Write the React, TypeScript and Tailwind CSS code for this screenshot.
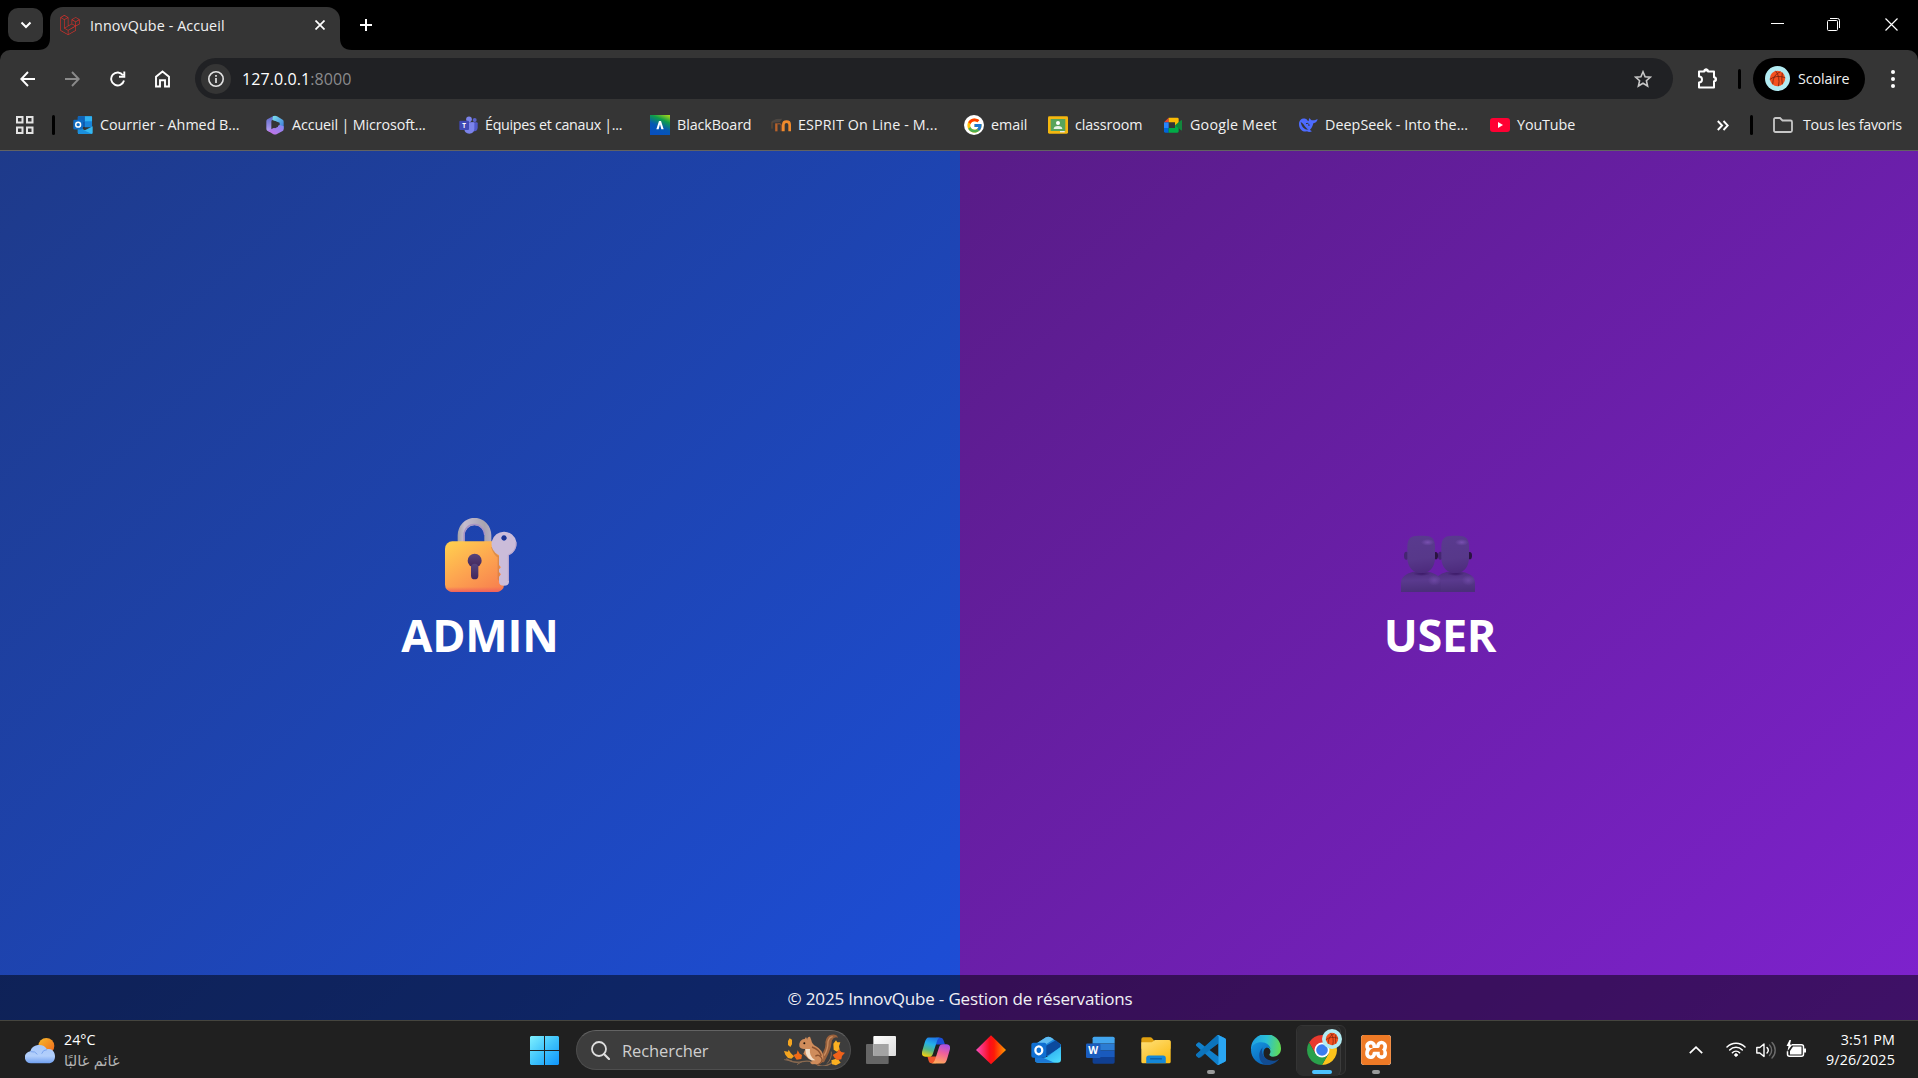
import type { ReactNode } from "react";
import { FcGoogle } from "react-icons/fc";
import { SiLaravel, SiXampp } from "react-icons/si";

/* ---------- Bookmark icons (20 x 20) ---------- */

const OutlookMark = () => (
  <svg className="size-5" viewBox="218 345 62 62">
    <path d="M233 353q0-4 4-4h36q4 0 4 4v28h-44z" fill="#1a8fe0" />
    <path d="M233 349h22v16h-22z" fill="#0f63b8" />
    <path d="M255 349h22v16h-22z" fill="#2fb2f2" />
    <path d="M233 365h22v16h-22z" fill="#0f59ad" />
    <path d="M255 365h22v18h-22z" fill="#1784d9" />
    <path d="M233 382l22 10 24-12v20q0 4-4 4h-38q-4 0-4-4z" fill="#35b8f1" />
    <path d="M233 384l44 20h-40q-4 0-4-4z" fill="#1a8fdd" />
    <rect x="219" y="360" width="30" height="30" rx="3" fill="#0f6cc4" />
    <circle cx="234" cy="375" r="7.5" fill="none" stroke="#fff" strokeWidth="4.5" />
  </svg>
);

const M365Mark = () => (
  <svg className="size-5" viewBox="795 345 60 60">
    <defs>
      <linearGradient id="m1" x1="0" y1="0" x2="0" y2="1">
        <stop offset="0" stopColor="#5a68c8" />
        <stop offset="1" stopColor="#b9a2f4" />
      </linearGradient>
      <linearGradient id="m2" x1="0" y1="0" x2="1" y2="1">
        <stop offset="0" stopColor="#7de4ee" />
        <stop offset="1" stopColor="#3a74d8" />
      </linearGradient>
      <linearGradient id="m3" x1="0" y1="1" x2="1" y2="0">
        <stop offset="0" stopColor="#cc6fe6" />
        <stop offset="1" stopColor="#7f8af0" />
      </linearGradient>
    </defs>
    <path d="M820 348l-18 10q-3 2-3 6v22q0 4 3 6l8 4q4 0 4-5v-26q0-4 3-6l12-7z" fill="url(#m1)" />
    <path d="M819 349q6-4 12 0l17 10q3 2 3 6v22l-12-10v-9l-22-8z" fill="url(#m2)" />
    <path d="M803 392l18-8 18-9 12 4v8q0 4-3 6l-17 9q-6 3-12 0z" fill="url(#m3)" />
    <path d="M817 368l8-5 9 5v12l-9 5-8-5z" fill="#353535" />
  </svg>
);

const TeamsMark = () => (
  <svg className="size-5" viewBox="53 195 60 60">
    <circle cx="103" cy="210" r="6" fill="#5a62c9" />
    <circle cx="86" cy="208" r="8.500" fill="#7b83eb" />
    <path d="M92 217h17q3 0 3 3v12q0 12-10 12-6 0-8-3z" fill="#5059c9" />
    <path d="M72 217h27q3 0 3 3v15q0 16-15 16t-15-16z" fill="#7b83eb" />
    <rect x="57" y="212" width="29" height="28" rx="3" fill="#4149b5" />
    <text x="71.500" y="233" textAnchor="middle" fontSize="19" fontWeight="700" fill="#fff">T</text>
  </svg>
);

const BlackboardMark = () => (
  <svg className="size-5" viewBox="0 0 60 60">
    <defs>
      <linearGradient id="bb" x1="0.9" y1="0" x2="0.45" y2="1">
        <stop offset="0" stopColor="#a6d61c" />
        <stop offset="0.3" stopColor="#0f9e49" />
        <stop offset="0.65" stopColor="#0558b4" />
        <stop offset="1" stopColor="#0650c0" />
      </linearGradient>
    </defs>
    <path fill="url(#bb)" d="M0 0h60v60H0z" />
    <path d="M19 43l8-25h6l8 25h-7l-4-15-4 15z" fill="#fff" />
  </svg>
);

const MoodleMark = () => (
  <svg className="size-5" viewBox="993 195 60 60">
    <path d="M994 214l15-7 18-1-8 10-21 2z" fill="#4d4742" />
    <path d="M996 216v20" stroke="#8a5a32" strokeWidth="2" />
    <path d="M1009 244v-24" stroke="#b9622a" strokeWidth="7" />
    <path d="M1012 222q10-3 12 4v18" fill="none" stroke="#8a5230" strokeWidth="4" />
    <path d="M1030 244v-20q0-9 9.500-9t9.500 9v20" fill="none" stroke="#f08a2c" strokeWidth="8" />
  </svg>
);

const GoogleMark = () => (
  <span className="flex size-5 items-center justify-center rounded-full bg-white">
    <FcGoogle className="size-[17px]" />
  </span>
);

const ClassroomMark = () => (
  <svg className="size-5" viewBox="0 0 60 60">
    <rect x="0" y="4" width="60" height="52" rx="4" fill="#f4b70f" />
    <rect x="8" y="12" width="44" height="36" fill="#57a45b" />
    <circle cx="30" cy="24" r="6" fill="#fff" />
    <path d="M17 42q0-9 13-9t13 9z" fill="#e6f2e6" />
    <path d="M36 48h14v4H36z" fill="#e8eaed" />
  </svg>
);

const MeetMark = () => (
  <svg className="size-5" viewBox="669 195 60 60">
    <path d="M672 217l14-14v14z" fill="#ea4335" />
    <path d="M686 203h26q4 0 4 4v15l-11 8v-13h-19z" fill="#fbbc04" />
    <path d="M672 217h14v17h-14z" fill="#2684fc" />
    <path d="M672 234h14v14h-10q-4 0-4-4z" fill="#0066da" />
    <path d="M686 234h19v-9l11 8v11q0 4-4 4h-26z" fill="#00ac47" />
    <path d="M705 226l18-15q3-2 3 2v26q0 4-3 2z" fill="#12873c" />
  </svg>
);

const DeepSeekMark = () => (
  <svg className="size-5" viewBox="1073 195 60 60">
    <path
      d="M1076 222c0-12 9-18 19-16 5 1 5 4 9 8 3-4 0-6 4-10 2 5 5 7 9 7 6 0 10-2 15-4-1 7-6 12-13 13-2 9-5 15-10 19 2 3 6 4 6 5-5 3-11 3-15 0-14 4-24-8-24-22z"
      fill="#4d6bfe"
    />
    <path d="M1081 216c7 2 10 11 17 18 2 2 5 4 7 4-11 3-21-6-24-22z" fill="#353535" />
    <path d="M1097 221c5-3 10 1 9 7" fill="none" stroke="#353535" strokeWidth="3" />
  </svg>
);

const YouTubeMark = () => (
  <svg className="size-5" viewBox="0 0 60 60">
    <rect y="9" width="60" height="42" rx="9" fill="#ff0033" />
    <path d="M24 21v18l15-9z" fill="#fff" />
  </svg>
);

function Bookmark({ icon, label, width, text }: { icon: ReactNode; label: string; width: string; text: string }) {
  return (
    <div className={`flex shrink-0 items-center gap-[7px] ${width}`}>
      {icon}
      <span className={`whitespace-nowrap ${text}`}>{label}</span>
    </div>
  );
}

/* ---------- Basketball avatar ---------- */

const Basketball = ({ className }: { className: string }) => (
  <svg className={className} viewBox="0 0 26 26">
    <circle cx="13" cy="13" r="13" fill="#b2ebf2" />
    <circle cx="13" cy="13" r="8" fill="#f4511e" />
    <path d="M5 14q6-5 16-2M11 5q5 6 3 16M16 6q-8 3-8 13M18 7q-1 7 0 12" fill="none" stroke="#7a2410" strokeWidth="0.9" />
  </svg>
);

/* ---------- Browser window ---------- */

function TabStrip() {
  return (
    <div className="flex h-[50px] bg-black pl-2">
      <button className="mt-2 flex h-[34px] w-[35px] items-center justify-center rounded-[10px] bg-[#353535]">
        <svg className="size-3" viewBox="0 0 12 12">
          <path d="M1.500 3.500L6 8l4.500-4.500" fill="none" stroke="#fff" strokeWidth="2" />
        </svg>
      </button>
      <div className="relative ml-[7px] mt-[7px] flex h-[43px] w-[290px] items-center rounded-t-[13px] bg-[#353535] pb-[7px] pl-[10px]">
        <svg className="absolute -left-3 bottom-0 size-3" viewBox="0 0 12 12">
          <path d="M12 0v12H0Q12 12 12 0z" fill="#353535" />
        </svg>
        <svg className="absolute -right-3 bottom-0 size-3" viewBox="0 0 12 12">
          <path d="M0 0v12h12Q0 12 0 0z" fill="#353535" />
        </svg>
        <SiLaravel className="size-5 text-[#d9302a]" />
        <span className="ml-[10px] w-[225px] whitespace-nowrap pt-px text-[14.300px] tracking-[0.1px] text-[#f1f1f1]">
          InnovQube - Accueil
        </span>
        <svg className="size-[10px]" viewBox="0 0 10 10">
          <path d="M.5.5l9 9m0-9l-9 9" stroke="#fff" strokeWidth="1.700" />
        </svg>
      </div>
      <svg className="ml-5 mt-[19px] size-3" viewBox="0 0 12 12">
        <path d="M6 0v12M0 6h12" stroke="#fff" strokeWidth="2" />
      </svg>
      <div className="ml-auto mr-5 mt-[18px] flex h-[13px] items-start">
        <svg className="mr-[43px] h-[13px] w-[13px]" viewBox="0 0 13 13">
          <path d="M0 5.500h13" stroke="#fff" strokeWidth="1" />
        </svg>
        <svg className="mr-[45px] size-[13px]" viewBox="0 0 13 13" fill="none" stroke="#fff">
          <rect x=".5" y="2.500" width="10" height="10" rx="1" />
          <path d="M3 .5h7.500a2 2 0 0 1 2 2V10" />
        </svg>
        <svg className="size-[13px]" viewBox="0 0 13 13">
          <path d="M.5.5l12 12m0-12l-12 12" stroke="#fff" strokeWidth="1.200" />
        </svg>
      </div>
    </div>
  );
}

function Toolbar() {
  return (
    <div className="bg-black">
      <div className="flex h-[50px] items-center rounded-t-[10px] bg-[#353535] pb-px pl-5 pt-2">
        <svg className="mr-[30px] h-4 w-[15px]" viewBox="0 0 15 16" fill="none" stroke="#fff" strokeWidth="1.900">
          <path d="M15 8H1.500M8 1L1.300 8 8 15" />
        </svg>
        <svg className="mr-[30px] h-4 w-[15px]" viewBox="0 0 15 16" fill="none" stroke="#8a8a8a" strokeWidth="1.900">
          <path d="M0 8h13.500M7 1l6.700 7L7 15" />
        </svg>
        <svg className="mr-[29px] size-4" viewBox="0 0 16 16" fill="none" stroke="#fff" strokeWidth="1.900">
          <path d="M14 9.500A6.500 6.500 0 1 1 13 4.200M14.300.5v5.200H9" />
        </svg>
        <svg className="mr-[25px] h-[18px] w-[15px]" viewBox="0 0 15 18" fill="none" stroke="#fff" strokeWidth="1.900">
          <path d="M1 16.500V6.700L7.500 1.500 14 6.700v9.800h-4v-6.200H5v6.200z" />
        </svg>
        <div className="flex h-[41px] w-[1478px] items-center rounded-full bg-[#202124] pl-[6px] pr-[21px]">
          <span className="flex size-[30px] items-center justify-center rounded-full bg-[#353535]">
            <svg className="size-4" viewBox="0 0 16 16">
              <circle cx="8" cy="8" r="7.200" fill="none" stroke="#e3e3e3" strokeWidth="1.600" />
              <path d="M8 7v5M8 4v1.800" stroke="#e3e3e3" strokeWidth="1.700" />
            </svg>
          </span>
          <span className="ml-[11px] pt-px text-[16px] tracking-[0.080px] text-white">
            127.0.0.1<span className="text-[#8b8b8d]">:8000</span>
          </span>
          <svg className="ml-auto h-[18px] w-[18px]" viewBox="0 0 18 18" fill="none" stroke="#c7c7c7" strokeWidth="1.600">
            <path d="M9 1.800l2.100 4.900 5.300.5-4 3.500 1.200 5.300L9 13.200 4.400 16l1.200-5.300-4-3.500 5.300-.5z" />
          </svg>
        </div>
        <svg className="ml-6 h-[21px] w-[21px]" viewBox="0 0 21 21">
          <path
            d="M2 3.500h5.200a1.900 1.900 0 0 1 3.800 0h6V9.200a2 2 0 0 1 0 4V19.500H2v-5a3 3 0 0 0 0-6z"
            fill="none"
            stroke="#fff"
            strokeWidth="2"
            strokeLinejoin="round"
          />
          <path d="M7 2.500a2.100 2.100 0 0 1 4.200 0v1H7zM17.500 9.200a2.100 2.100 0 0 1 0 4.200z" fill="#fff" />
        </svg>
        <span className="ml-[20px] h-5 w-[3px] rounded bg-black" />
        <div className="ml-3 flex h-[42px] w-[112px] items-center rounded-full bg-black pl-3">
          <Basketball className="size-[25px]" />
          <span className="ml-2 text-[14.300px] tracking-[-0.1px] text-[#f1f1f1]">Scolaire</span>
        </div>
        <svg className="ml-[26px] h-[18px] w-1" viewBox="0 0 4 18" fill="#fff">
          <circle cx="2" cy="2" r="2" />
          <circle cx="2" cy="9" r="2" />
          <circle cx="2" cy="16" r="2" />
        </svg>
      </div>
    </div>
  );
}

function BookmarksBar() {
  return (
    <div className="flex h-[51px] items-center border-b border-[#626262] bg-[#353535] pl-4 text-[14.300px] text-[#f1f1f1]">
      <svg className="size-[18px]" viewBox="0 0 18 18" fill="none" stroke="#e3e3e3" strokeWidth="2">
        <path d="M1 1h5.500v5.500H1zM11 1h5.500v5.500H11zM1 11.500h5.500V17H1zM11 11.500h5.500V17H11z" />
      </svg>
      <span className="ml-[18px] mr-[18px] h-5 w-[3px] rounded bg-black" />
      <Bookmark icon={<OutlookMark />} label="Courrier - Ahmed B..." width="w-[192px]" text="tracking-normal" />
      <Bookmark icon={<M365Mark />} label="Accueil | Microsoft..." width="w-[193px]" text="tracking-[-0.12px]" />
      <Bookmark icon={<TeamsMark />} label="Équipes et canaux |..." width="w-[192px]" text="tracking-[-0.3px]" />
      <Bookmark icon={<BlackboardMark />} label="BlackBoard" width="w-[121px]" text="tracking-[-0.1px]" />
      <Bookmark icon={<MoodleMark />} label="ESPRIT On Line - M..." width="w-[193px]" text="tracking-[0.15px]" />
      <Bookmark icon={<GoogleMark />} label="email" width="w-[84px]" text="tracking-normal" />
      <Bookmark icon={<ClassroomMark />} label="classroom" width="w-[115px]" text="tracking-[-0.1px]" />
      <Bookmark icon={<MeetMark />} label="Google Meet" width="w-[135px]" text="tracking-[0.2px]" />
      <Bookmark icon={<DeepSeekMark />} label="DeepSeek - Into the..." width="w-[192px]" text="tracking-[0.05px]" />
      <Bookmark icon={<YouTubeMark />} label="YouTube" width="w-[227px]" text="tracking-[-0.1px]" />
      <svg className="h-[11px] w-3" viewBox="0 0 12 11" fill="none" stroke="#fff" strokeWidth="1.900">
        <path d="M.8 1l4.300 4.500L.8 10M6.500 1l4.300 4.500L6.500 10" />
      </svg>
      <span className="ml-[21px] mr-5 h-5 w-[3px] rounded bg-black" />
      <svg className="h-4 w-5" viewBox="0 0 20 16" fill="none" stroke="#c7c7c7" strokeWidth="1.800">
        <path d="M1 2.500Q1 1 2.500 1H7l2.500 2.500h8Q19 3.500 19 5v8.500q0 1.500-1.500 1.500h-15Q1 15 1 13.500z" />
      </svg>
      <span className="ml-[10px] whitespace-nowrap tracking-[-0.250px]">Tous les favoris</span>
    </div>
  );
}

/* ---------- Page content ---------- */

const LockWithKey = () => (
  <svg className="h-[74px] w-[72px]" viewBox="195 53 216 222">
    <defs>
      <linearGradient id="body" x1="0.1" y1="0" x2="0.8" y2="1">
        <stop offset="0" stopColor="#ffce4f" />
        <stop offset="0.5" stopColor="#fda650" />
        <stop offset="1" stopColor="#f8814f" />
      </linearGradient>
      <linearGradient id="edge" x1="0" y1="0" x2="0" y2="1">
        <stop offset="0.9" stopColor="#f0605c" stopOpacity="0" />
        <stop offset="1" stopColor="#f0605c" />
      </linearGradient>
      <linearGradient id="shackle" x1="0" y1="0" x2="1" y2="0">
        <stop offset="0" stopColor="#a4a3a8" />
        <stop offset="0.2" stopColor="#c6bccf" />
        <stop offset="0.8" stopColor="#a8a4b0" />
        <stop offset="1" stopColor="#b7aec0" />
      </linearGradient>
      <linearGradient id="hole" x1="0" y1="0" x2="0" y2="1">
        <stop offset="0" stopColor="#55447c" />
        <stop offset="1" stopColor="#43265b" />
      </linearGradient>
    </defs>
    <path d="M233 130v-25a50 52 0 0 1 101 0v25h-21v-25a29 30 0 0 0-59 0v25z" fill="url(#shackle)" />
    <path d="M252 124v-20a31 32 0 0 1 62 0" fill="none" stroke="#a792c4" strokeWidth="4" />
    <rect x="195" y="123" width="177" height="152" rx="22" fill="url(#body)" />
    <rect x="195" y="123" width="177" height="152" rx="22" fill="url(#edge)" />
    <path d="M336 140q8 24 20 30v66l14 20" fill="none" stroke="#c27a45" strokeOpacity=".55" strokeWidth="6" />
    <circle cx="284" cy="181" r="21" fill="url(#hole)" />
    <rect x="273" y="190" width="22" height="47" rx="11" fill="url(#hole)" />
    <path
      fillRule="evenodd"
      d="M373 94a37 37 0 0 1 14 71v79q0 12-15 12t-15-12v-15l6-7-6-7v-8l6-6-6-7v-29a37 37 0 0 1 16-71zM372 105a8 8 0 1 0 .1 0z"
      fill="#cbbcd9"
    />
    <path d="M408 125a37 37 0 0 1-23 39v78" fill="none" stroke="#b5a1cd" strokeWidth="3" />
    <circle cx="372" cy="113" r="7" fill="#1d3290" />
  </svg>
);

const UsersSilhouette = () => (
  <svg className="h-[58px] w-[74px]" viewBox="125 106 222 174">
    <defs>
      <linearGradient id="head" x1="0.5" y1="0" x2="0.6" y2="1">
        <stop offset="0" stopColor="#593a8e" />
        <stop offset="0.6" stopColor="#57388a" />
        <stop offset="1" stopColor="#4c2a7c" />
      </linearGradient>
      <linearGradient id="torso" x1="0" y1="0" x2="0.1" y2="1">
        <stop offset="0" stopColor="#4d2b7c" />
        <stop offset="0.45" stopColor="#5a3a8e" />
        <stop offset="1" stopColor="#4b2f7a" />
      </linearGradient>
      <radialGradient id="shine">
        <stop offset="0" stopColor="#7850b0" />
        <stop offset="1" stopColor="#7850b0" stopOpacity="0" />
      </radialGradient>
      <radialGradient id="neck">
        <stop offset="0" stopColor="#3a1866" />
        <stop offset="1" stopColor="#3a1866" stopOpacity="0" />
      </radialGradient>
    </defs>
    {[102, 0].map((dx) => (
      <g key={dx} transform={`translate(${dx} 0)`}>
        <path d="M125 277v-26c0-20 14-28 36-35h46c24 6 38 14 38 35v26z" fill="url(#torso)" />
        <ellipse cx="187" cy="222" rx="26" ry="7" fill="url(#neck)" />
        <ellipse cx="225" cy="242" rx="20" ry="16" fill="url(#shine)" opacity=".6" />
        <ellipse cx="141" cy="168" rx="7" ry="12" fill="#452672" />
        <ellipse cx="229" cy="168" rx="7" ry="11" fill="#2a1440" />
        <path d="M144 142c0-26 10-34 34-34h15c24 0 34 8 34 34v33c0 28-18 46-41 46s-42-18-42-46z" fill="url(#head)" />
        <ellipse cx="205" cy="128" rx="20" ry="10" fill="url(#shine)" />
      </g>
    ))}
  </svg>
);

function Landing() {
  return (
    <main className="flex h-[869px] w-[1920px] flex-col">
      <div className="relative grid h-full grid-cols-2 text-white">
        <section className="flex flex-col items-center bg-[linear-gradient(to_bottom_right,#1e3a8a,#1d4ed8)] pt-[367px]">
          <div className="pl-[2px]">
            <LockWithKey />
          </div>
          <h1 className="mt-[13px] text-[45px] font-bold leading-[60px] tracking-[-0.2px]">ADMIN</h1>
        </section>
        <section className="flex flex-col items-center bg-[linear-gradient(to_bottom_right,#581c87,#7e22ce)] pt-[384px]">
          <div className="pr-1">
            <UsersSilhouette />
          </div>
          <h1 className="mt-[12px] text-[45px] font-bold leading-[60px] tracking-[-0.3px]">USER</h1>
        </section>
        <footer className="absolute inset-x-0 bottom-0 flex h-[45px] items-center justify-center bg-black/50 pt-[2px] text-[17px] tracking-[-0.170px] text-[#f0f0f4]">
          © 2025 InnovQube - Gestion de réservations
        </footer>
      </div>
    </main>
  );
}

/* ---------- Taskbar icons ---------- */

const Weather = () => (
  <svg className="h-[26px] w-[30px]" viewBox="75 203 90 78">
    <defs>
      <linearGradient id="sun" x1="0" y1="0" x2="1" y2="1">
        <stop offset="0" stopColor="#f7bb2c" />
        <stop offset="1" stopColor="#f0641a" />
      </linearGradient>
      <linearGradient id="cloud" x1="0" y1="0" x2="0" y2="1">
        <stop offset="0" stopColor="#a9c8fa" />
        <stop offset="0.6" stopColor="#b2cffb" />
        <stop offset="1" stopColor="#6f9ff0" />
      </linearGradient>
    </defs>
    <circle cx="139" cy="227" r="24" fill="url(#sun)" />
    <path d="M94 279a18 18 0 0 1-3-36 27 25 0 0 1 50-6c14-4 24 7 24 21s-8 21-20 21z" fill="url(#cloud)" />
    <path d="M92 244q14-2 20 8M141 238q-12 0-16 12" fill="none" stroke="#7aa4ee" strokeWidth="3" />
  </svg>
);

const StartLogo = () => (
  <svg className="size-[29px]" viewBox="0 0 29 29">
    <defs>
      <linearGradient id="win" x1="0" y1="0" x2="1" y2="1">
        <stop offset="0" stopColor="#7ff0ff" />
        <stop offset="0.5" stopColor="#3fc3fb" />
        <stop offset="1" stopColor="#0f94fb" />
      </linearGradient>
    </defs>
    <path d="M1 0h13v14H0V1zM15 0h13l1 1v13H15zM0 15h14v14H1l-1-1zM15 15h14v13l-1 1H15z" fill="url(#win)" />
  </svg>
);

const Squirrel = () => (
  <svg className="h-8 w-[62px]" viewBox="39 45 186 96">
    <g fill="none" stroke="#8a6a50" strokeLinecap="round">
      <path d="M50 120q20 14 46 8t44 8 48-6 20-14" strokeWidth="4" />
      <path d="M66 126l-22-4M172 133q14-14 12-34M96 128l-14 8" strokeWidth="3" />
    </g>
    <path d="M54 66l5-8 7 4v14l-5 8-7-6zM42 96l12 2 2-6 6 10 10 10-8 7-10-2-8-10z" fill="#f5a51f" />
    <path d="M70 108l10-4 3-10 6 10 7 4-2 12-14 2z" fill="#f06a17" />
    <path d="M190 74l8-10 4 6 9 0-4 12 2 10-8 6-10-6zM184 124l12-4 10 3 6 8-14 8-12-3z" fill="#fbb021" />
    <path d="M188 108l14-8 4-9 8 8 11 2-9 10-2 10-12 2-8-6z" fill="#f1611a" />
    <path d="M150 130q2-18 10-32t6-28q2-20 18-23t20 9q-12-4-18 8-2 22-10 38t-14 28z" fill="#9a613c" />
    <path d="M162 110q12-18 12-42 4-14 14-15" fill="none" stroke="#c98d5f" strokeWidth="4" />
    <path
      d="M88 74q4-14 16-14l4-6 4 8q-2-8 8-9l4 11q2 12 14 18 22 12 22 34 0 14-12 19l-22 1-6-5 8-5q-14-4-20-14l-8-8 6-14q-14 2-18-8z"
      fill="#cf8c5b"
    />
    <path d="M106 90q0 24 18 34l12 0q-20-12-16-34z" fill="#f2ddc6" />
    <path d="M126 84q22 8 28 26M136 112q10-8 18 4t-12 22" fill="none" stroke="#8b5230" strokeWidth="4" />
    <circle cx="103" cy="73" r="3" fill="#1c120c" />
  </svg>
);

const TaskView = () => (
  <svg className="h-7 w-[30px]" viewBox="0 0 90 84">
    <defs>
      <linearGradient id="tv" x1="0" y1="0" x2="1" y2="1">
        <stop offset="0" stopColor="#fff" />
        <stop offset="1" stopColor="#dcdcdc" />
      </linearGradient>
    </defs>
    <rect x="0" y="24" width="68" height="60" rx="3" fill="#666" />
    <rect x="22" y="0" width="68" height="60" rx="3" fill="url(#tv)" />
    <path d="M22 24h46v36H22z" fill="#a3a3a3" />
  </svg>
);

const Copilot = () => (
  <svg className="h-[27px] w-7" viewBox="66 200 84 80">
    <defs>
      <linearGradient id="cp1" x1="0.6" y1="0" x2="0.3" y2="1">
        <stop offset="0" stopColor="#1e78e8" />
        <stop offset="0.35" stopColor="#25b0e8" />
        <stop offset="0.65" stopColor="#52b788" />
        <stop offset="1" stopColor="#f3d00f" />
      </linearGradient>
      <linearGradient id="cp2" x1="0.3" y1="1" x2="0.6" y2="0">
        <stop offset="0" stopColor="#a64fe8" />
        <stop offset="0.45" stopColor="#f0609a" />
        <stop offset="1" stopColor="#ffa95c" />
      </linearGradient>
    </defs>
    <path d="M108 202h14c8 0 9 9 13 20h-27z" fill="#1b4fd8" />
    <path d="M108 278H94c-8 0-8-9-12-20h27z" fill="#f0562c" />
    <path
      d="M86 201h36c-6 0-10 6-12 14l-11 34c-2 7-5 10-12 10H77c-11 0-13-8-10-18l7-24c3-10 6-16 12-16z"
      fill="url(#cp1)"
    />
    <path
      d="M86 201h36c-6 0-10 6-12 14l-11 34c-2 7-5 10-12 10H77c-11 0-13-8-10-18l7-24c3-10 6-16 12-16z"
      transform="rotate(180 108 240)"
      fill="url(#cp2)"
    />
  </svg>
);

const Diamond = () => (
  <svg className="size-[30px]" viewBox="228 194 90 90">
    <defs>
      <linearGradient id="dia" x1="0" x2="1">
        <stop offset="0" stopColor="#f84fc0" />
        <stop offset="0.45" stopColor="#fb0d1e" />
        <stop offset="0.6" stopColor="#fd1a08" />
        <stop offset="1" stopColor="#ff9d00" />
      </linearGradient>
    </defs>
    <path d="M273 195l45 44-45 43-45-43z" fill="url(#dia)" />
  </svg>
);

const OutlookApp = () => (
  <svg className="size-[30px]" viewBox="392 198 92 90">
    <defs>
      <linearGradient id="ol" x1="0" x2="1" y2="1">
        <stop offset="0" stopColor="#1b8fe6" />
        <stop offset="1" stopColor="#4fe0ff" />
      </linearGradient>
    </defs>
    <path d="M404 226l34-22q7-4 14 0l32 22v10l-40 28-40-20z" fill="#1c86dc" />
    <path d="M404 226l34-22q7-4 14 0l10 6-42 27-16-8z" fill="#5fbcf2" />
    <path d="M420 240l48-27 14 12v10l-44 28z" fill="#0b4a9e" />
    <path d="M484 232v40q0 10-10 10h-60q-9 0-10-8l38-10z" fill="url(#ol)" />
    <path d="M404 256l60 26h-50q-10 0-10-10z" fill="#1b78d6" />
    <rect x="393" y="221" width="46" height="46" rx="6" fill="#0f6fd2" />
    <ellipse cx="416" cy="244" rx="10.500" ry="12" fill="none" stroke="#fff" strokeWidth="7" />
  </svg>
);

const WordApp = () => (
  <svg className="h-[29px] w-[29px]" viewBox="558 197 88 86">
    <path d="M578 203q0-5 5-5h57q5 0 5 5v16h-67z" fill="#42a5ee" />
    <path d="M578 219h67v21h-67z" fill="#2b7cd3" />
    <path d="M578 240h67v20h-67z" fill="#195abd" />
    <path d="M578 260h67v15q0 5-5 5h-57q-5 0-5-5z" fill="#103f91" />
    <rect x="558" y="219" width="44" height="44" rx="4" fill="#1a5dbe" />
    <text x="580" y="252" textAnchor="middle" fontSize="31" fontWeight="700" fill="#fff">W</text>
  </svg>
);

const Explorer = () => (
  <svg className="size-[30px]" viewBox="722 195 92 92">
    <defs>
      <linearGradient id="fold" x1="0" x2="0.7" y2="1">
        <stop offset="0" stopColor="#ffe07a" />
        <stop offset="1" stopColor="#fbbc16" />
      </linearGradient>
    </defs>
    <path d="M723 208q0-6 6-6h21q4 0 7 4l5 6h46q5 0 5 5v20h-90z" fill="#e0a010" />
    <path d="M723 217h32l10-7h43q5 0 5 5v62q0 5-5 5h-80q-5 0-5-5z" fill="url(#fold)" />
    <path d="M738 282v-16q0-8 8-8h44q8 0 8 8v16z" fill="#1487d8" />
    <path d="M750 268h36" stroke="#0c5ca3" strokeWidth="4" />
  </svg>
);

const VsCode = () => (
  <svg className="size-[30px]" viewBox="0 0 24 24">
    <path
      d="M23.150 2.587L18.210.21a1.494 1.494 0 0 0-1.705.29l-9.460 8.630-4.120-3.128a.999.999 0 0 0-1.276.057L.327 7.261A1 1 0 0 0 .326 8.740L3.899 12 .326 15.260a1 1 0 0 0 .001 1.479L1.650 17.940a.999.999 0 0 0 1.276.057l4.120-3.128 9.460 8.630a1.492 1.492 0 0 0 1.704.290l4.942-2.377A1.500 1.500 0 0 0 24 20.060V3.939a1.500 1.500 0 0 0-.850-1.352zm-5.146 14.861L10.826 12l7.178-5.448v10.896z"
      fill="#1080cc"
    />
    <path d="M17 .3q.6-.4 1.200-.1l4.950 2.387A1.500 1.500 0 0 1 24 3.940v16.120a1.500 1.500 0 0 1-.85 1.350L18.200 23.790q-.6.300-1.200-.1 1 .1 1-1.200V1.500q0-1.200-1-1.200z" fill="#2aa6f3" />
    <path d="M7.045 9.130L16.500.5q1.500-.6 1.500 1v5.050L10.826 12 3.900 18l-1 0L1.650 17.940.327 16.740q-.6-.7 0-1.480z" fill="#0b6db3" opacity=".65" />
  </svg>
);

const Edge = () => (
  <svg className="size-[30px]" viewBox="1053 195 90 90">
    <defs>
      <linearGradient id="e1" x1="0" y1="0.4" x2="1" y2="0.5">
        <stop offset="0" stopColor="#1e9fe4" />
        <stop offset="0.5" stopColor="#2bc0d6" />
        <stop offset="1" stopColor="#62dc52" />
      </linearGradient>
      <linearGradient id="e2" x1="0" y1="0" x2="0.6" y2="1">
        <stop offset="0" stopColor="#1597e0" />
        <stop offset="1" stopColor="#0a63b8" />
      </linearGradient>
    </defs>
    <path d="M1053 238a45 44 0 0 1 90-4c1 18-12 26-24 26-9 0-13-4-10-8 6-9 0-22-14-22-20 0-38 10-42 8z" fill="url(#e1)" />
    <path d="M1053 240c2-16 18-24 32-23 14 0 25 9 27 21-6-8-16-8-20 2-6 18 6 32 22 42-32 10-61-12-61-42z" fill="url(#e2)" />
    <path d="M1088 232c-8 24 12 42 34 40 8-1 12-4 16-6-10 14-24 19-38 19-20-2-32-32-12-53z" fill="#124c92" />
  </svg>
);

const Chrome = () => (
  <svg className="size-[30px]" viewBox="-45 -45 90 90">
    <path d="M-38.970-22.500A45 45 0 0 1 38.970-22.500L0-22.500-19.490 11.250z" fill="#e8392e" />
    <path d="M38.970-22.500A45 45 0 0 1 0 45L19.490 11.250 0-22.500z" fill="#fcc31b" />
    <path d="M0 45A45 45 0 0 1-38.970-22.500L-19.490 11.250 19.490 11.250z" fill="#2aa14b" />
    <circle r="22.500" fill="#fff" />
    <circle r="17.500" fill="#3a7df0" />
  </svg>
);

const Xampp = () => (
  <span className="flex size-[30px] items-center justify-center rounded-[3px] bg-white">
    <SiXampp className="size-[30px] text-[#ee7a26]" />
  </span>
);

function TaskItem({ children, state }: { children: ReactNode; state?: "open" }) {
  return (
    <div className="flex h-[50px] w-[55px] shrink-0 flex-col items-center">
      <div className="flex h-[50px] items-center">{children}</div>
      {state === "open" && <span className="-mt-[5px] h-1 w-2 shrink-0 rounded-full bg-[#9a9a9a]" />}
    </div>
  );
}

function Taskbar() {
  return (
    <div className="flex h-[60px] w-[1920px] border-t border-[#45453f] bg-[#202020] text-[14.300px] text-white">
      <div className="flex w-[530px] shrink-0 pl-[25px] pt-[17px]">
        <Weather />
        <div className="-mt-[7px] ml-[9px] flex flex-col items-start">
          <span className="leading-[18px]">24°C</span>
          <span
            dir="rtl"
            className="mt-[3px] whitespace-nowrap font-['DejaVu_Sans',sans-serif] text-[14.500px] leading-[18px] text-[#b4b4b4]"
          >
            غائم غالبًا
          </span>
        </div>
      </div>
      <div className="flex items-start pt-1">
        <div className="mt-[11px]">
          <StartLogo />
        </div>
        <div className="ml-[17px] mt-[5px] flex h-10 w-[275px] items-center rounded-full border border-[#4e4e4e] border-t-[#636363] bg-[#3d3d3d] pl-[14px] pr-[5px]">
          <svg className="size-[19px]" viewBox="0 0 19 19" fill="none" stroke="#dedede">
            <circle cx="8" cy="8" r="7" strokeWidth="1.800" />
            <path d="M13 13l5 5" strokeWidth="2.200" strokeLinecap="round" />
          </svg>
          <span className="ml-3 pt-[2px] text-[16.500px] tracking-[-0.1px] text-[#cfcfcf]">Rechercher</span>
          <div className="ml-auto">
            <Squirrel />
          </div>
        </div>
        <div className="ml-[2px] flex">
          <TaskItem><TaskView /></TaskItem>
          <TaskItem><Copilot /></TaskItem>
          <TaskItem><Diamond /></TaskItem>
          <TaskItem><OutlookApp /></TaskItem>
          <TaskItem><WordApp /></TaskItem>
          <TaskItem><Explorer /></TaskItem>
          <TaskItem state="open"><VsCode /></TaskItem>
          <TaskItem><Edge /></TaskItem>
          <div className="relative ml-[3px] flex h-[50px] w-[50px] shrink-0 flex-col rounded-md border border-[#343434] bg-[#262626]">
            <div className="flex h-[50px] w-11 shrink-0 flex-col items-center rounded-md border-r border-[#3c3c3c] bg-[#2d2d2d] pl-[6px] pt-[9px]">
              <Chrome />
              <span className="mt-[5px] h-1 w-5 shrink-0 rounded-full bg-[#4cc2ff]" />
            </div>
            <Basketball className="absolute left-[25px] top-[3px] size-5" />
          </div>
          <div className="ml-[2px]">
            <TaskItem state="open"><Xampp /></TaskItem>
          </div>
        </div>
      </div>
      <div className="ml-auto flex pr-[25px] pt-5">
        <svg className="mt-[5px] h-2 w-[14px]" viewBox="0 0 14 8" fill="none" stroke="#fff" strokeWidth="1.700">
          <path d="M.8 7.200L7 1.200l6.200 6" />
        </svg>
        <svg className="ml-[23px] h-4 w-5" viewBox="0 0 20 16" fill="none" stroke="#fff" strokeWidth="1.500" strokeLinecap="round">
          <path d="M1 6a12.500 12.500 0 0 1 18 0M3.700 9a8.800 8.800 0 0 1 12.600 0M6.400 11.800a5.200 5.200 0 0 1 7.200 0" />
          <circle cx="10" cy="14" r="1.300" fill="#fff" strokeWidth="1" />
        </svg>
        <svg className="ml-[10px] h-[18px] w-5" viewBox="0 0 20 18" fill="none" strokeWidth="1.400" strokeLinecap="round">
          <path d="M.8 6.500h3L8 3v12.500L3.800 12h-3z" stroke="#fff" strokeLinejoin="round" />
          <path d="M11 6.500a4 4 0 0 1 0 5.500" stroke="#fff" />
          <path d="M13.500 4a7.500 7.500 0 0 1 0 10.500M16 1.500a11 11 0 0 1 0 15.500" stroke="#6c6c6c" />
        </svg>
        <svg className="-mt-[1px] ml-[10px] h-[18px] w-5" viewBox="0 0 20 18">
          <path d="M6 4.700h9.500q2 0 2 2v7.600q0 2-2 2h-12q-2 0-2-2v-3" fill="none" stroke="#fff" strokeWidth="1.500" />
          <path d="M7 6.500h8.500v8H4v-3.500z" fill="#fff" />
          <path d="M18 8.500h2v4h-2z" fill="#fff" />
          <path d="M3.500 0L.5 6h2l-1 5L6.500 4.500h-2.500L5 0z" fill="#fff" />
        </svg>
        <div className="-mt-[11px] ml-5 flex w-[69px] flex-col items-end whitespace-nowrap leading-5">
          <span className="tracking-[0.1px]">3:51 PM</span>
          <span className="tracking-[0.15px]">9/26/2025</span>
        </div>
      </div>
    </div>
  );
}

export default function App() {
  return (
    <div className="h-[1078px] w-full overflow-hidden bg-black font-['Open_Sans','Noto_Sans',sans-serif]">
      <TabStrip />
      <Toolbar />
      <BookmarksBar />
      <Landing />
      <Taskbar />
    </div>
  );
}
